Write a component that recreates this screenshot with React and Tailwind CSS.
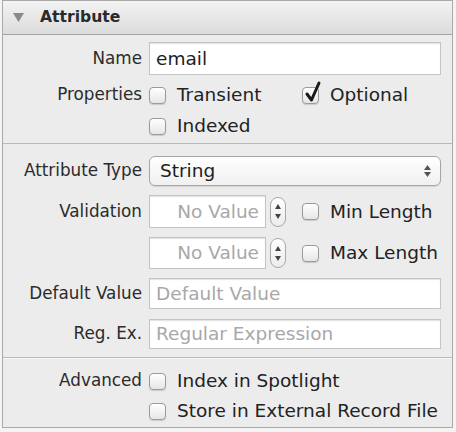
import { useState } from "react";

const FONT = { fontFamily: '"DejaVu Sans", "Open Sans", sans-serif' };

function CheckBox({ checked }) {
  return (
    <span className="relative inline-block w-[17px] h-[17px] shrink-0 rounded-[4px] border border-[#9a9a9a] bg-gradient-to-b from-[#ffffff] to-[#e6e6e6] shadow-[0_1px_1px_rgba(0,0,0,0.15)]">
      {checked && (
        <svg className="absolute left-[1px] top-[-7px]" width="18" height="22" viewBox="0 0 18 22">
          <path d="M3 13 L7.5 19 L15 2" fill="none" stroke="#1a1a1a" strokeWidth="3" strokeLinecap="round" strokeLinejoin="round" />
        </svg>
      )}
    </span>
  );
}

function Check({ label, checked, className = "" }) {
  return (
    <div className={"flex items-center gap-[11px] " + className}>
      <CheckBox checked={checked} />
      <span className="text-[#222] text-[18.5px]">{label}</span>
    </div>
  );
}

function Row({ label, children, className = "" }) {
  return (
    <div className={"flex items-center " + className}>
      <div className="w-[139px] shrink-0 text-right text-[#2b2b2b]">{label}</div>
      <div className="flex-1 flex items-center pl-[7px] pr-[11px]">{children}</div>
    </div>
  );
}

function TextBox({ value, placeholder, className = "" }) {
  return (
    <div className={"flex items-center bg-white border border-[#c4c4c4] shadow-[inset_0_1px_1px_rgba(0,0,0,0.12)] px-[6px] text-[18.5px] " + className}>
      {value ? <span className="text-[#1e1e1e]">{value}</span> : <span className="text-[#a8a8a8]">{placeholder}</span>}
    </div>
  );
}

function Stepper() {
  return (
    <div className="ml-[4px] w-[16px] h-[30px] rounded-[8px] border border-[#a8a8a8] bg-gradient-to-b from-white to-[#ececec] flex flex-col items-center justify-center gap-[5px]">
      <svg width="6" height="5" viewBox="0 0 6 5"><path d="M0 5 L3 0 L6 5 Z" fill="#444" /></svg>
      <svg width="6" height="5" viewBox="0 0 6 5"><path d="M0 0 L3 5 L6 0 Z" fill="#444" /></svg>
    </div>
  );
}

export default function App() {
  const [open] = useState(true);

  return (
    <div className="w-[456px] h-[432px] bg-[#f4f4f4]" style={FONT}>
      <div className="ml-[2px] w-[451px] h-[428px] border border-[#a9a9a9] bg-[#ececec] text-[16.8px] flex flex-col">
        <div className="h-[34px] shrink-0 flex items-center gap-[16px] pl-[10px] border-b border-[#a5a5a5] bg-gradient-to-b from-[#f3f3f3] to-[#dcdcdc]">
          <svg width="11" height="9" viewBox="0 0 11 9"><path d="M0 0 L11 0 L5.5 9 Z" fill="#8a8a8a" /></svg>
          <span className="font-bold text-[15.6px] text-[#2a2a2a]">{open ? "Attribute" : ""}</span>
        </div>

        <div className="h-[109px] shrink-0 pt-[7px] border-b border-[#b9b9b9]">
          <Row label="Name">
            <TextBox value="email" className="w-full h-[33px] border-[#bdbdbd]" />
          </Row>
          <Row label="Properties" className="h-[30px] mt-[5px]">
            <Check label="Transient" className="w-[153px]" />
            <Check label="Optional" checked />
          </Row>
          <Row label="" className="h-[30px] mt-[1px]">
            <Check label="Indexed" />
          </Row>
        </div>

        <div className="h-[214px] shrink-0 pt-[12px] border-b border-[#b9b9b9] flex flex-col">
          <Row label="Attribute Type">
            <div className="w-full h-[30px] rounded-[6px] border border-[#a6a6a6] bg-gradient-to-b from-white to-[#f0f0f0] shadow-[0_1px_1px_rgba(0,0,0,0.1)] flex items-center justify-between pl-[10px] pr-[9px]">
              <span className="text-[#1e1e1e] text-[18.5px]">String</span>
              <svg width="7" height="12" viewBox="0 0 7 12">
                <path d="M0 5 L3.5 0 L7 5 Z" fill="#555" />
                <path d="M0 7 L3.5 12 L7 7 Z" fill="#555" />
              </svg>
            </div>
          </Row>
          <Row label="Validation" className="mt-[9px]">
            <TextBox placeholder="No Value" className="w-[117px] h-[33px] justify-end" />
            <Stepper />
            <Check label="Min Length" className="ml-[16px]" />
          </Row>
          <Row label="" className="mt-[9px]">
            <TextBox placeholder="No Value" className="w-[117px] h-[32px] justify-end" />
            <Stepper />
            <Check label="Max Length" className="ml-[16px]" />
          </Row>
          <Row label="Default Value" className="mt-[9px]">
            <TextBox placeholder="Default Value" className="w-full h-[31px]" />
          </Row>
          <Row label="Reg. Ex." className="mt-[10px]">
            <TextBox placeholder="Regular Expression" className="w-full h-[30px]" />
          </Row>
        </div>

        <div className="flex-1 pt-[7px] border-t border-[#f8f8f8]">
          <Row label="Advanced" className="h-[30px]">
            <Check label="Index in Spotlight" />
          </Row>
          <Row label="" className="h-[30px]">
            <Check label="Store in External Record File" />
          </Row>
        </div>
      </div>
    </div>
  );
}
